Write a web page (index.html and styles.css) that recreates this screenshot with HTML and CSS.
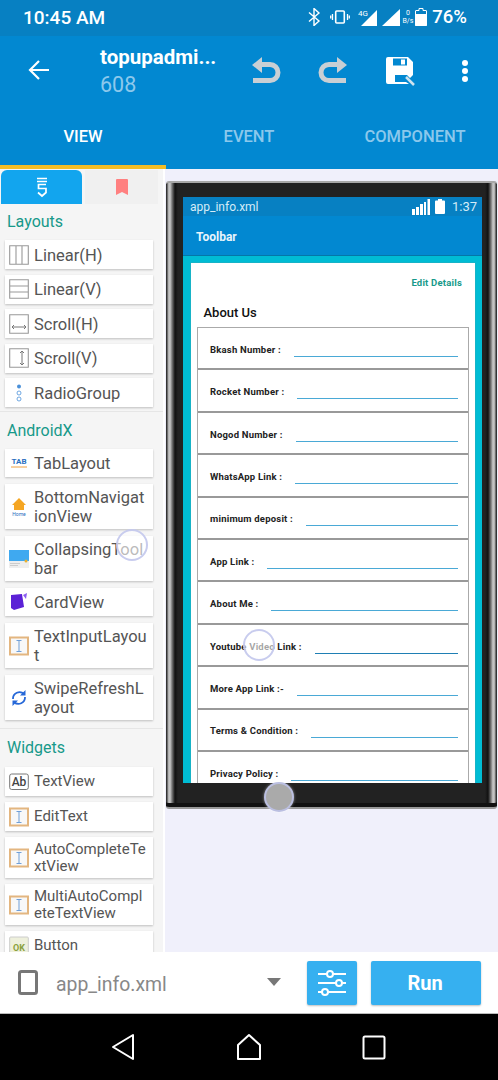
FILE: index.html
```html
<!DOCTYPE html>
<html lang="en">
<head>
<meta charset="utf-8">
<title>app_info.xml</title>
<link rel="stylesheet" href="styles.css">
</head>
<body>
<div class="app">
  <div class="statusbar">
    <span class="time">10:45 AM</span>
    <div class="status-right">
      <svg class="si" width="14" height="18" viewBox="0 0 14 18"><path d="M1 4.500l10 8.500-5 4.500V.5l5 4.500-10 8.500" fill="none" stroke="#fff" stroke-width="1.400"/></svg>
      <svg class="si" width="20" height="14" viewBox="0 0 20 14"><rect x="5.700" y="1" width="8.600" height="12" rx="1" fill="none" stroke="#fff" stroke-width="1.600"/><path d="M2.500 4v6M0.700 5.500v3M17.500 4v6M19.300 5.500v3" stroke="#fff" stroke-width="1.300"/></svg>
      <svg class="si g4" width="20" height="17" viewBox="0 0 20 17"><path d="M19 1v16H3z" fill="#fff"/><text x="0" y="7" class="tiny">4G</text></svg>
      <svg class="si sig" width="18" height="17" viewBox="0 0 18 17"><path d="M18 0v17H0z" fill="#fff"/></svg>
      <span class="bs"><span>0</span><span>B/s</span></span>
      <svg class="si bat" width="12" height="18" viewBox="0 0 12 18"><path d="M4 .5h4v2h3a.5.500 0 0 1 .5.500v14a.5.500 0 0 1-.5.500H1a.5.500 0 0 1-.5-.5V3a.5.500 0 0 1 .5-.5h3z" fill="none" stroke="#fff"/><rect y="6" width="12" height="12" rx="1" fill="#fff"/></svg>
      <span class="pct">76%</span>
    </div>
  </div>
  <div class="toolbar">
    <svg class="back" width="24" height="24" viewBox="0 0 24 24"><path d="M22 12H3M12 3l-9 9 9 9" fill="none" stroke="#fff" stroke-width="2.200"/></svg>
    <div class="title">
      <div class="t1">topupadmi...</div>
      <div class="t2">608</div>
    </div>
    <svg class="undo" width="30" height="30" viewBox="0 0 30 30"><path d="M1 9l10-8v5h8a10 10 0 0 1 0 21H2v-5h17a5 5 0 0 0 0-11h-8v6z" fill="#c9cfd4"/></svg>
    <svg class="redo" width="30" height="30" viewBox="0 0 30 30"><path d="M29 9L19 1v5h-8a10 10 0 0 0 0 21h17v-5H11a5 5 0 0 1 0-11h8v6z" fill="#c9cfd4"/></svg>
    <svg class="save" width="30" height="30" viewBox="0 0 30 30"><path d="M2 0h20l5 5v13l-3 3-3-3H9v7h11l3 2H2a2 2 0 0 1-2-2V2a2 2 0 0 1 2-2z" fill="#fff"/><rect x="7" y="1.500" width="14" height="7" fill="#0288d1"/><rect x="15" y="2.500" width="4" height="5" fill="#fff"/><path d="M20 20l8 8" stroke="#cfe3ef" stroke-width="2.500"/></svg>
    <svg class="dots" width="6" height="22" viewBox="0 0 6 22"><circle cx="3" cy="3" r="3" fill="#fff"/><circle cx="3" cy="11" r="3" fill="#fff"/><circle cx="3" cy="19" r="3" fill="#fff"/></svg>
  </div>
  <div class="tabs">
    <div class="tab active">VIEW</div>
    <div class="tab">EVENT</div>
    <div class="tab">COMPONENT</div>
  </div>

  <div class="main">
    <div class="panel">
      <div class="ptabs">
        <div class="ptab on">
          <svg width="12" height="21" viewBox="0 0 12 21"><path d="M1 1.500h10M1 4.500h10M10 7.500H2.500v4H10v4l-4 3.500-4-3.500" fill="none" stroke="#fff" stroke-width="1.700"/></svg>
        </div>
        <div class="ptab off">
          <svg width="12" height="16" viewBox="0 0 12 16"><path d="M0 1a1 1 0 0 1 1-1h10a1 1 0 0 1 1 1v15l-6-3-6 3z" fill="#ff8080"/></svg>
        </div>
      </div>

      <div class="sec">Layouts</div>
      <div class="list tight">
        <div class="item"><svg class="ic" viewBox="0 0 20 20"><path d="M.7.700h18.600v18.600H.7zM7 .7v18.600M13 .7v18.600" fill="none" stroke="#999" stroke-width="1.100"/></svg><span class="lbl">Linear(H)</span></div>
        <div class="item"><svg class="ic" viewBox="0 0 20 20"><path d="M.7.700h18.600v18.600H.7zM.7 7h18.600M.7 13h18.600" fill="none" stroke="#999" stroke-width="1.100"/></svg><span class="lbl">Linear(V)</span></div>
        <div class="item"><svg class="ic" viewBox="0 0 20 20"><path d="M.7.700h18.600v18.600H.7z" fill="none" stroke="#999" stroke-width="1.100"/><path d="M3 13h14M5 11l-2 2 2 2M15 11l2 2-2 2" fill="none" stroke="#777" stroke-width="1"/></svg><span class="lbl">Scroll(H)</span></div>
        <div class="item"><svg class="ic" viewBox="0 0 20 20"><path d="M.7.700h18.600v18.600H.7z" fill="none" stroke="#999" stroke-width="1.100"/><path d="M13 3v14M11 5l2-2 2 2M11 15l2 2 2-2" fill="none" stroke="#777" stroke-width="1"/></svg><span class="lbl">Scroll(V)</span></div>
        <div class="item"><svg class="ic" viewBox="0 0 20 20"><circle cx="10" cy="3.500" r="2" fill="#4a90d9"/><circle cx="10" cy="10" r="2" fill="none" stroke="#4a90d9" stroke-width=".8"/><circle cx="10" cy="16" r="2" fill="none" stroke="#4a90d9" stroke-width=".8"/></svg><span class="lbl">RadioGroup</span></div>
      </div>
      <div class="divider first"></div>

      <div class="sec after">AndroidX</div>
      <div class="list">
        <div class="item"><svg class="ic" viewBox="0 0 20 20"><text x="10" y="11" class="tab-t">TAB</text><path d="M2 14h16" stroke="#f0a040" stroke-width="1"/></svg><span class="lbl">TabLayout</span></div>
        <div class="item two"><svg class="ic" viewBox="0 0 20 20"><path d="M10 1L3 8h2v5h10V8h2z" fill="#f5a623"/><text x="10" y="18.500" class="home-t">Home</text></svg><span class="lbl">BottomNavigationView</span></div>
        <div class="item two"><svg class="ic" viewBox="0 0 20 20"><rect y="1" width="20" height="11" fill="#3fa9f0"/><rect y="12" width="20" height="7" fill="#eee"/><rect x="1" y="14" width="10" height="1" fill="#ccc"/><rect x="1" y="16" width="8" height="1" fill="#ccc"/><circle cx="17" cy="12" r="1.500" fill="#e8b030"/></svg><span class="lbl">CollapsingToolbar</span></div>
        <div class="item"><svg class="ic" viewBox="0 0 20 20"><path d="M14 3l4-2-1 6z" fill="#8a5cf0"/><path d="M2 3l11-1 2 13-10 3-3-2z" fill="#5b21d6"/></svg><span class="lbl">CardView</span></div>
        <div class="item two"><svg class="ic" viewBox="0 0 20 20"><use href="#edit"/></svg><span class="lbl">TextInputLayout</span></div>
        <div class="item two"><svg class="ic" viewBox="0 0 20 20"><path d="M4 11a6.500 6.500 0 0 1 11-5M16 9a6.500 6.500 0 0 1-11 5" fill="none" stroke="#2668d8" stroke-width="1.800"/><path d="M16.500 2v5.500H11zM3.500 18v-5.500H9z" fill="#2668d8"/></svg><span class="lbl">SwipeRefreshLayout</span></div>
      </div>
      <div class="divider"></div>

      <div class="sec after">Widgets</div>
      <div class="list small">
        <div class="item"><svg class="ic" viewBox="0 0 20 20"><rect x=".7" y="2" width="18.600" height="15.500" rx="2" fill="none" stroke="#777" stroke-width="1"/><text x="10" y="14" class="ab-t">Ab</text></svg><span class="lbl">TextView</span></div>
        <div class="item"><svg class="ic" viewBox="0 0 20 20"><use href="#edit"/></svg><span class="lbl">EditText</span></div>
        <div class="item two"><svg class="ic" viewBox="0 0 20 20"><use href="#edit"/></svg><span class="lbl">AutoCompleteTextView</span></div>
        <div class="item two"><svg class="ic" viewBox="0 0 20 20"><use href="#edit"/></svg><span class="lbl">MultiAutoCompleteTextView</span></div>
        <div class="item"><svg class="ic" viewBox="0 0 20 20"><rect x=".7" y="1" width="18.600" height="18" rx="1" fill="#eef0dc" stroke="#ccc" stroke-width="1"/><text x="10" y="15" class="ok-t">OK</text></svg><span class="lbl">Button</span></div>
      </div>
    </div>

    <div class="canvas">
      <div class="phone">
        <div class="screen">
          <div class="p-status">
            <span class="p-file">app_info.xml</span>
            <svg width="18" height="16" viewBox="0 0 18 16"><path d="M0 10h3v6H0zM4 8h3v8H4zM8 5h3v11H8zM12 3h2v13h-2zM15.500 0H18v16h-2.500z" fill="#fff"/></svg>
            <svg width="10" height="15" viewBox="0 0 10 15"><path d="M3 0h4v1.500h2a1 1 0 0 1 1 1V14a1 1 0 0 1-1 1H1a1 1 0 0 1-1-1V2.500a1 1 0 0 1 1-1h2z" fill="#fff"/></svg>
            <span class="p-time">1:37</span>
          </div>
          <div class="p-bar">Toolbar</div>
          <div class="p-body">
            <div class="p-card">
              <div class="edit">Edit Details</div>
              <div class="about">About Us</div>
              <div class="box">
                <div class="row"><span>Bkash Number :</span><i></i></div>
                <div class="row"><span>Rocket Number :</span><i></i></div>
                <div class="row"><span>Nogod Number :</span><i></i></div>
                <div class="row"><span>WhatsApp Link :</span><i></i></div>
                <div class="row"><span>minimum deposit :</span><i></i></div>
                <div class="row"><span>App Link :</span><i></i></div>
                <div class="row"><span>About Me :</span><i></i></div>
                <div class="row"><span>Youtube Video Link :</span><i class="dark"></i></div>
                <div class="row"><span>More App Link :-</span><i></i></div>
                <div class="row"><span>Terms &amp; Condition :</span><i></i></div>
                <div class="row"><span>Privacy Policy :</span><i></i></div>
              </div>
            </div>
          </div>
        </div>
      </div>
    </div>
    <div class="touch t-a"></div>
    <div class="touch t-b"></div>
    <div class="touch t-c"></div>
  </div>

  <div class="bottom">
    <svg class="device" width="20" height="25" viewBox="0 0 20 25"><rect x="1.500" y="1.500" width="17" height="22" rx="2" fill="none" stroke="#777" stroke-width="3"/></svg>
    <span class="file">app_info.xml</span>
    <svg class="caret" width="14" height="8" viewBox="0 0 14 8"><path d="M0 0h14L7 8z" fill="#777"/></svg>
    <div class="btn set">
      <svg width="30" height="28" viewBox="0 0 30 28"><path d="M1 5h28M1 14h28M1 23h28" stroke="#fff" stroke-width="2"/><circle cx="13" cy="5" r="3" fill="#36b0f0" stroke="#fff" stroke-width="2"/><circle cx="22" cy="14" r="3" fill="#36b0f0" stroke="#fff" stroke-width="2"/><circle cx="8" cy="23" r="3" fill="#36b0f0" stroke="#fff" stroke-width="2"/></svg>
    </div>
    <div class="btn run">Run</div>
  </div>

  <div class="nav">
    <svg width="24" height="28" viewBox="0 0 24 28"><path d="M22 2v24L2 14z" fill="none" stroke="#fff" stroke-width="2" stroke-linejoin="round"/></svg>
    <svg width="26" height="28" viewBox="0 0 26 28"><path d="M13 2L2 12v14h22V12z" fill="none" stroke="#fff" stroke-width="2" stroke-linejoin="round"/></svg>
    <svg width="24" height="25" viewBox="0 0 24 25"><rect x="1.500" y="1.500" width="21" height="22" rx="1.500" fill="none" stroke="#fff" stroke-width="2"/></svg>
  </div>
</div>
<svg class="defs" width="0" height="0"><defs><g id="edit"><rect x="1" y="1.500" width="18" height="17" fill="#f8f8f8" stroke="#e3b680" stroke-width="2"/><path d="M7.500 4.500h5M7.500 15.500h5M10 4.500v11" fill="none" stroke="#6f9fd8" stroke-width="1"/></g></defs></svg>
</body>
</html>
```
FILE: styles.css
```css
* { box-sizing: border-box; }
html, body { margin: 0; padding: 0; }
body { width: 498px; height: 1080px; overflow: hidden; font-family: Roboto, "Liberation Sans", sans-serif; }
.defs { position: absolute; }
.app { display: flex; flex-direction: column; height: 1080px; width: 498px; }

.statusbar { height: 36px; background: #0780c2; display: flex; align-items: center; justify-content: space-between; padding: 0 31px 2px 23px; color: #fff; }
.time { font-size: 19px; font-weight: 500; }
.status-right { display: flex; align-items: center; }
.si { display: block; }
.status-right .si { margin-right: 8px; }
.status-right .g4 { margin-right: 4px; }
.status-right .sig { margin-right: 1px; }
.status-right .bat { margin-right: 5px; }
.tiny { font-size: 8px; fill: #fff; font-family: Roboto, sans-serif; }
.bs { display: flex; flex-direction: column; align-items: center; font-size: 7px; line-height: 8px; margin-right: 1px; width: 13px; }
.pct { font-size: 18.500px; font-weight: 500; }

.toolbar { height: 79px; background: #0288d1; display: flex; align-items: center; position: relative; padding-left: 27px; }
.back { margin-top: -12px; }
.title { width: 151px; margin-left: 49px; }
.t1 { font-size: 20.500px; font-weight: 700; color: #fff; line-height: 24px; margin-top: -7px; }
.t2 { font-size: 21.500px; color: #8cc8ec; line-height: 28px; margin-top: 2px; }
.undo { margin-top: -9px; }
.redo { margin-left: 37px; margin-top: -9px; }
.save { margin-left: 38px; margin-top: -8px; }
.dots { margin-left: 46px; margin-top: -9px; }

.tabs { height: 54px; background: #0288d1; display: flex; }
.tab { width: 166px; font-size: 16.500px; font-weight: 500; color: #8cc8ec; display: flex; justify-content: center; padding-top: 12px; border-bottom: 4px solid transparent; white-space: nowrap; }
.tab.active { color: #fff; border-bottom-color: #f2bd27; }

.main { height: 783px; display: flex; position: relative; background: #f0f0fb; overflow: hidden; }
.panel { width: 165px; height: 783px; overflow: hidden; background: #f5f5f5; border-right: 2px solid #fff; padding-top: 1px; flex: none; }
.ptabs { display: flex; height: 34px; padding-left: 1px; gap: 3px; }
.ptab { display: flex; align-items: center; justify-content: center; height: 34px; }
.ptab.on { width: 81px; background: #12a5ee; border-radius: 6px 6px 0 0; }
.ptab.off { width: 73px; background: #f0f0f0; }
.sec { font-size: 16px; color: #17998a; padding-left: 7px; height: 36px; line-height: 35px; }
.sec.after { height: 37px; line-height: 37px; }
.list { display: flex; flex-direction: column; gap: 7px; padding: 0 10px 0 5px; }
.list.tight { gap: 5.600px; }
.item { display: flex; align-items: center; background: #fff; min-height: 28px; box-shadow: 0 1px 2px rgba(0,0,0,.22); padding-left: 4px; flex: none; }
.tight .item { min-height: 29px; padding-top: 1px; }
.item.two { min-height: 45px; }
.ic { width: 20px; height: 20px; flex: none; margin-right: 5px; }
.tight .ic { margin-top: -1px; }
.lbl { font-size: 16.500px; line-height: 19px; color: #555; width: 113.700px; word-break: break-all; }
.small { gap: 6px; margin-top: 1px; }
.small .item { min-height: 29px; }
.small .lbl { font-size: 15px; line-height: 17px; width: 114.500px; }
.small .item.two { min-height: 41px; }
.divider { height: 1px; background: #e6e6e6; margin-top: 8px; }
.divider.first { margin-top: 4px; }
.tab-t { font-size: 8px; font-weight: 700; fill: #2b6fc0; text-anchor: middle; font-family: Roboto, sans-serif; }
.home-t { font-size: 5px; fill: #2b6fc0; text-anchor: middle; font-family: Roboto, sans-serif; }
.ab-t { font-size: 12px; fill: #444; font-weight: 500; text-anchor: middle; font-family: Roboto, sans-serif; }
.ok-t { font-size: 9px; font-weight: 700; fill: #8aa03c; text-anchor: middle; font-family: Roboto, sans-serif; }

.canvas { flex: 1; padding: 12px 0 0 1px; }
.phone { width: 331px; height: 628px; border-radius: 3px; border-top: 2px solid #a8a8a8; border-bottom: 2px solid #999; padding: 14px 15px 0 17px; background: linear-gradient(90deg, #333 0, #333 1px, #aaa 2px, #ccc 4px, #777 6px, #111 9px, #222 12px, #222 calc(100% - 12px), #111 calc(100% - 9px), #777 calc(100% - 6px), #ccc calc(100% - 4px), #aaa calc(100% - 2px), #333 calc(100% - 1px), #333 100%); box-shadow: inset 0 -4px 0 #111; }
.screen { width: 299px; height: 586px; overflow: hidden; background: #00bcd4; }
.p-status { height: 19px; background: #0780c2; display: flex; align-items: center; color: #fff; padding: 0 5px 0 7px; gap: 5px; }
.p-file { font-size: 12px; flex: 1; color: #d5ecf8; }
.p-time { font-size: 13px; color: #d5ecf8; margin-left: 2px; }
.p-bar { height: 40px; background: #0288d1; color: #e8f5fc; font-size: 12px; font-weight: 700; padding-left: 13px; line-height: 42px; border-bottom: 1px solid #0477a8; }
.p-body { padding: 7px 7px 0 8px; }
.p-card { background: #fff; padding: 0 6px; height: 540px; box-shadow: 0 0 1px #888; }
.edit { color: #17998a; font-size: 9.500px; font-weight: 700; text-align: right; letter-spacing: .2px; padding: 14px 7px 0 0; line-height: 12px; }
.about { font-size: 13px; font-weight: 500; color: #111; padding: 16px 0 0 6.500px; line-height: 16px; height: 38px; }
.box { border: 1px solid #aaa; border-bottom: 0; }
.row { height: 42.400px; display: flex; align-items: flex-end; padding: 0 10px 11.500px 12px; gap: 13px; border-bottom: 2px solid #999; }
.row span { font-size: 9.500px; font-weight: 700; letter-spacing: .2px; color: #222; line-height: 12px; white-space: nowrap; padding-bottom: 1px; }
.row i { flex: 1; height: 1px; background: #4aa9d6; }
.row i.dark { background: #1f7fb4; }

.touch { position: absolute; border-radius: 50%; border: 2px solid rgba(190,195,235,.85); background: rgba(255,255,255,.6); width: 32px; height: 32px; }
.t-a { left: 116px; top: 360px; }
.t-b { left: 243px; top: 460px; }
.t-c { left: 264px; top: 613px; width: 30px; height: 30px; background: #aaa; box-shadow: 0 0 3px rgba(255,255,255,.5); }

.bottom { height: 62px; background: #fff; display: flex; align-items: center; border-bottom: 1px solid #bbb; padding-left: 18px; }
.device { flex: none; }
.file { font-size: 19.400px; color: #888; margin-left: 18px; width: 211px; padding-top: 3px; }
.caret { flex: none; margin-top: -1px; }
.btn { height: 44px; background: #36b0f0; border-radius: 2px; display: flex; align-items: center; justify-content: center; box-shadow: 0 1px 2px rgba(0,0,0,.25); color: #fff; font-weight: 700; font-size: 20px; }
.set { width: 50px; margin-left: 26px; }
.run { width: 110px; margin-left: 14px; padding-right: 2px; padding-top: 1px; }

.nav { height: 66px; background: #000; display: flex; align-items: center; padding-left: 111px; gap: 100.500px; }
```
